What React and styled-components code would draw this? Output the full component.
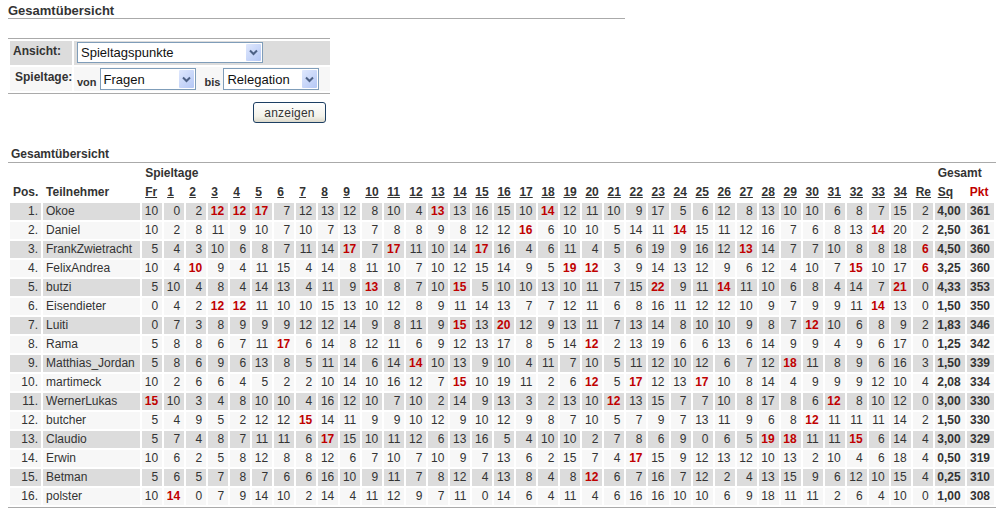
import React from 'react'
import styled, { createGlobalStyle } from 'styled-components'

const GlobalStyle = createGlobalStyle`
  html, body {
    margin: 0;
    background: #fff;
  }
  body {
    font-family: "Liberation Sans", Arial, sans-serif;
    font-size: 12px;
    color: #333;
  }
`

const Page = styled.div`
  display: flex;
  flex-direction: column;
  align-items: flex-start;
  padding: 0 8px;
  width: 988px;
`

const PageTitle = styled.h1`
  width: 617px;
  margin: 0;
  padding-top: 3px;
  font-size: 13px;
  line-height: 15px;
  font-weight: bold;
  color: #333;
  border-bottom: 1px solid #aaa;
`

const FilterGrid = styled.form`
  display: grid;
  grid-template-columns: 62px 256px;
  grid-auto-rows: 24px;
  gap: 2px;
  width: 320px;
  margin-top: 19px;
  padding: 2px 0 2px 2px;
  border-top: 1px solid #aaa;
  border-bottom: 1px solid #aaa;
`

const FilterLabel = styled.div`
  padding: 3px 0 0 ${props => props.$indent}px;
  line-height: 14px;
  font-weight: bold;
  background: ${props => (props.$shaded ? '#dcdcdc' : '#f7f7f7')};
`

const FilterField = styled.div`
  display: flex;
  align-items: flex-start;
  padding: 1px 0 0 3px;
  background: ${props => (props.$shaded ? '#dcdcdc' : '#f7f7f7')};
`

const RangeWord = styled.span`
  margin: ${props => (props.$first ? '0 3px 0 0' : '0 3px 0 9px')};
  padding-top: 7px;
  font-size: 11px;
  line-height: 14px;
  font-weight: bold;
`

const SelectFrame = styled.div`
  position: relative;
  width: ${props => props.$width}px;
  height: ${props => props.$height}px;
`

const Select = styled.select`
  display: block;
  box-sizing: border-box;
  width: 100%;
  height: 100%;
  margin: 0;
  padding: 0 18px 0 3px;
  appearance: none;
  border: 1px solid #7f9db9;
  border-radius: 0;
  background: #fff;
  font-family: "Liberation Sans", Arial, sans-serif;
  font-size: 13px;
  color: #111;
`

const SelectArrow = styled.span`
  position: absolute;
  top: 2px;
  right: 2px;
  bottom: 2px;
  width: 15px;
  display: flex;
  align-items: center;
  justify-content: center;
  border-radius: 1px;
  background: linear-gradient(135deg, #dfe8fd, #b4c7f5);
  pointer-events: none;
`

const ButtonRow = styled.div`
  display: flex;
  justify-content: flex-end;
  width: 318px;
  margin-top: 8px;
`

const SubmitButton = styled.button`
  box-sizing: border-box;
  width: 73px;
  height: 21px;
  padding: 0;
  border: 1px solid #1d3f63;
  border-radius: 3px;
  background: linear-gradient(#fff, #f3f2ea 70%, #dcd9cb);
  font-family: "Liberation Sans", Arial, sans-serif;
  font-size: 12px;
  letter-spacing: 0.2px;
  color: #333;
`

const SectionTitle = styled.h2`
  width: 985px;
  margin: 23px 0 0;
  padding-left: 3px;
  font-size: 12px;
  line-height: 16px;
  font-weight: bold;
  color: #333;
`

const Table = styled.table`
  table-layout: fixed;
  width: 988px;
  border-collapse: separate;
  border-spacing: 2px;
  border-top: 1px solid #aaa;
  border-bottom: 1px solid #aaa;
  font-size: 12px;
  color: #333;
`

const Col = styled.col`
  width: ${props => props.$width}px;
`

const HeadCell = styled.th`
  height: 17px;
  padding: 0 0 0 3px;
  line-height: 17px;
  font-weight: bold;
  text-align: left;
  white-space: nowrap;
  color: ${props => (props.$red ? '#c00000' : '#333')};
`

const HeadLink = styled.a`
  color: #333;
  text-decoration: underline;
`

const Row = styled.tr`
  background: ${props => (props.$shaded ? '#dcdcdc' : '#f7f7f7')};
`

const PosCell = styled.td`
  height: 17px;
  padding: 0 3px 0 0;
  line-height: 17px;
  text-align: right;
`

const NameCell = styled.td`
  padding: 0 0 0 3px;
  line-height: 17px;
  white-space: nowrap;
  overflow: hidden;
`

const PointCell = styled.td`
  padding: 0 4px 0 0;
  line-height: 17px;
  text-align: right;
  font-weight: ${props => (props.$high ? 'bold' : 'normal')};
  color: ${props => (props.$high ? '#c00000' : '#333')};
`

const TotalCell = styled.td`
  padding: 0 4px 0 0;
  line-height: 17px;
  text-align: right;
  font-weight: bold;
`

const rounds = ['Fr', ...Array.from({ length: 34 }, (_, i) => String(i + 1)), 'Re']

// * marks the best score of a round
const players = [
  ['Okoe', '10 0 2 12* 12* 17* 7 12 13 12 8 10 4 13* 13 16 15 10 14* 12 11 10 9 17 5 6 12 8 13 10 10 6 8 7 15 2', '4,00', 361],
  ['Daniel', '10 2 8 11 9 10 7 10 7 13 7 8 8 9 8 12 12 16* 6 10 10 5 14 11 14* 15 11 12 16 7 6 8 13 14* 20 2', '2,50', 361],
  ['FrankZwietracht', '5 4 3 10 6 8 7 11 14 17* 7 17* 11 10 14 17* 16 4 6 11 4 5 6 19 9 16 12 13* 14 7 7 10 8 8 18 6*', '4,50', 360],
  ['FelixAndrea', '10 4 10* 9 4 11 15 4 14 8 11 10 7 10 12 15 14 9 5 19* 12* 3 9 14 13 12 9 6 12 4 10 7 15* 10 17 6*', '3,25', 360],
  ['butzi', '5 10 4 8 4 14 13 4 11 9 13* 8 7 10 15* 5 10 10 13 10 11 7 15 22* 9 11 14* 11 10 6 8 4 14 7 21* 0', '4,33', 353],
  ['Eisendieter', '0 4 2 12* 12* 11 10 10 15 13 10 12 8 9 11 14 13 7 7 12 11 6 8 16 11 12 12 10 9 7 9 9 11 14* 13 0', '1,50', 350],
  ['Luiti', '0 7 3 8 9 9 9 12 12 14 9 8 11 9 15* 13 20* 12 9 13 11 7 13 14 8 10 10 9 8 7 12* 10 6 8 9 2', '1,83', 346],
  ['Rama', '5 8 8 6 7 11 17* 6 14 8 12 11 6 9 12 13 17 8 5 14 12* 2 13 19 6 6 13 6 14 9 9 4 9 6 17 0', '1,25', 342],
  ['Matthias_Jordan', '5 8 6 9 6 13 8 5 11 14 6 14 14* 10 13 9 10 4 11 7 10 5 11 12 10 12 6 7 12 18* 11 8 9 6 16 3', '1,50', 339],
  ['martimeck', '10 2 6 6 4 5 2 2 10 14 10 16 12 7 15* 10 19 11 2 6 12* 5 17* 12 13 17* 10 8 14 4 9 9 9 12 10 4', '2,08', 334],
  ['WernerLukas', '15* 10 3 4 8 10 10 4 16 12 10 7 10 2 14 9 13 3 2 13 10 12* 13 15 7 7 10 8 17 8 6 12* 8 10 12 0', '3,00', 330],
  ['butcher', '5 4 9 5 2 12 12 15* 14 11 9 9 10 12 9 10 12 9 8 7 10 5 7 9 7 13 11 9 6 8 12* 11 11 11 14 2', '1,50', 330],
  ['Claudio', '5 7 4 8 7 11 11 6 17* 15 10 11 12 6 13 16 5 4 10 10 2 7 8 6 9 0 6 5 19* 18* 11 11 15* 6 14 4', '3,00', 329],
  ['Erwin', '10 6 2 5 8 12 8 8 12 6 7 10 7 10 9 7 13 6 2 15 7 4 17* 15 9 12 13 12 10 13 2 10 4 6 18 4', '0,50', 319],
  ['Betman', '5 6 5 7 8 7 6 6 16 10 9 11 7 8 12 4 13 8 4 8 12* 6 7 16 7 12 2 4 13 15 9 6 12 10 15 4', '0,25', 310],
  ['polster', '10 14* 0 7 9 14 10 2 14 4 11 12 9 7 11 0 14 6 4 11 4 6 16 16 10 10 6 9 18 11 11 2 6 4 10 0', '1,00', 308],
]

const Dropdown = ({ width, height, value }) => (
  <SelectFrame $width={width} $height={height}>
    <Select defaultValue={value}>
      <option>{value}</option>
    </Select>
    <SelectArrow>
      <svg width="9" height="7" viewBox="0 0 9 7">
        <path d="M1 1.5 L4.5 5 L8 1.5" fill="none" stroke="#4d6185" strokeWidth="2" />
      </svg>
    </SelectArrow>
  </SelectFrame>
)

const App = () => (
  <>
    <GlobalStyle />
    <Page>
      <PageTitle>Gesamtübersicht</PageTitle>

      <FilterGrid>
        <FilterLabel $shaded $indent={3}>Ansicht:</FilterLabel>
        <FilterField $shaded>
          <Dropdown width={186} height={21} value="Spieltagspunkte" />
        </FilterField>
        <FilterLabel $indent={5}>Spieltage:</FilterLabel>
        <FilterField>
          <RangeWord $first>von</RangeWord>
          <Dropdown width={96} height={22} value="Fragen" />
          <RangeWord>bis</RangeWord>
          <Dropdown width={96} height={22} value="Relegation" />
        </FilterField>
      </FilterGrid>

      <ButtonRow>
        <SubmitButton type="button">anzeigen</SubmitButton>
      </ButtonRow>

      <SectionTitle>Gesamtübersicht</SectionTitle>
      <Table>
        <colgroup>
          <Col $width={31} />
          <Col $width={97} />
          {rounds.map(round => (
            <Col key={round} $width={20} />
          ))}
          <Col $width={30} />
          <Col $width={27} />
        </colgroup>
        <thead>
          <tr>
            <HeadCell colSpan={2} />
            <HeadCell colSpan={36}>Spieltage</HeadCell>
            <HeadCell colSpan={2}>Gesamt</HeadCell>
          </tr>
          <tr>
            <HeadCell>Pos.</HeadCell>
            <HeadCell>Teilnehmer</HeadCell>
            {rounds.map(round => (
              <HeadCell key={round}>
                <HeadLink href="#">{round}</HeadLink>
              </HeadCell>
            ))}
            <HeadCell>
              <HeadLink href="#">Sq</HeadLink>
            </HeadCell>
            <HeadCell $red>Pkt</HeadCell>
          </tr>
        </thead>
        <tbody>
          {players.map(([name, scores, quote, total], i) => (
            <Row key={name} $shaded={i % 2 === 0}>
              <PosCell>{i + 1}.</PosCell>
              <NameCell>{name}</NameCell>
              {scores.split(' ').map((score, j) => (
                <PointCell key={j} $high={score.endsWith('*')}>
                  {score.replace('*', '')}
                </PointCell>
              ))}
              <TotalCell>{quote}</TotalCell>
              <TotalCell>{total}</TotalCell>
            </Row>
          ))}
        </tbody>
      </Table>
    </Page>
  </>
)

export default App
